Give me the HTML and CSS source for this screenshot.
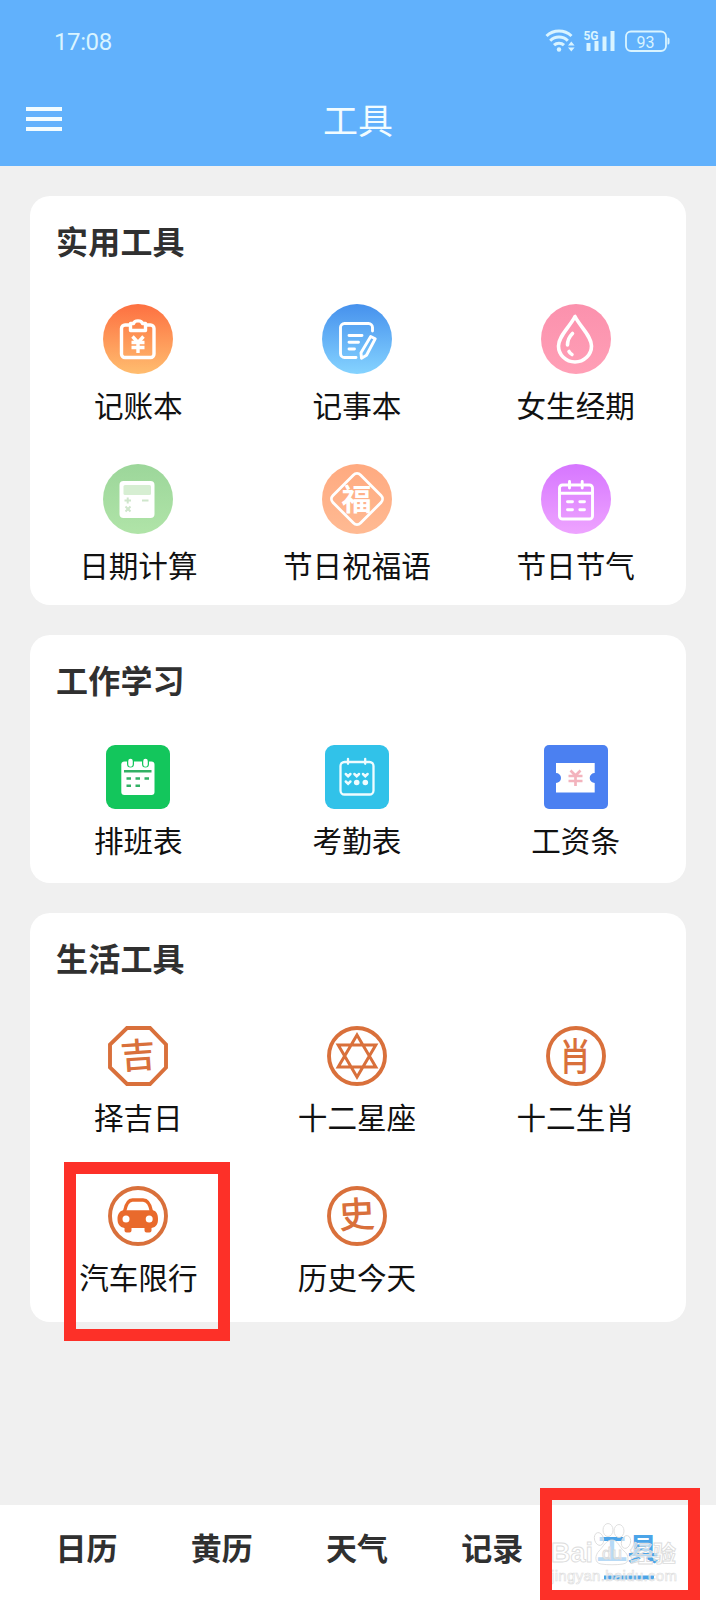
FILE: index.html
```
<!DOCTYPE html>
<html lang="zh-CN">
<head>
    <meta charset="UTF-8">
    <meta name="viewport" content="width=device-width, initial-scale=1.0">
    <title>工具</title>
    <link rel="stylesheet" href="styles.css">
</head>
<body>
    <header class="header">
        <div class="status-bar">
            <span class="time">17:08</span>
            <svg class="status-icons" viewBox="0 0 126 30">
                <g fill="none" stroke="#d9f4ff" stroke-width="3">
                    <path d="M1.5 10a18 18 0 0 1 25 0M5.2 14.7a12.500 12.500 0 0 1 17.600 0M9 19.200a7.200 7.200 0 0 1 10 0"/>
                </g>
                <g fill="#d9f4ff">
                    <circle cx="14" cy="23.500" r="2.200"/>
                    <path d="M23 19.500l3.300-4 3.300 4zM23 21.500h6.600l-3.300 4z"/>
                    <path d="M41.500 17h4v8h-4zM49.500 15h4v10h-4zM57.500 10.500h4V25h-4zM65.500 5h4v20h-4z"/>
                    <text class="net" x="38.500" y="14" textLength="15" lengthAdjust="spacingAndGlyphs">5G</text>
                    <path d="M122.500 11.500c1.500 0 2 1 2 2v3c0 1.500-.5 2-2 2z"/>
                    <text class="battery" x="91.500" y="21.500" textLength="18" lengthAdjust="spacingAndGlyphs">93</text>
                </g>
                <rect x="81" y="5.500" width="40" height="19.500" rx="5" fill="none" stroke="#d9f4ff" stroke-width="1.800"/>
            </svg>
        </div>
        <div class="title-bar">
            <div class="menu"><i></i><i></i><i></i></div>
            <h1>工具</h1>
        </div>
    </header>

    <main class="content">
        <section class="card card-practical">
            <h2>实用工具</h2>
            <div class="grid">
                <div class="item">
                    <svg class="icon" viewBox="0 0 70 70">
                        <defs><linearGradient id="g1" x2="0" y2="1"><stop stop-color="#fd7041"/><stop offset="1" stop-color="#ffbd6f"/></linearGradient></defs>
                        <circle cx="35" cy="35" r="35" fill="url(#g1)"/>
                        <g fill="none" stroke="#fff" stroke-width="3.400" stroke-linejoin="round">
                            <path d="M26 21h-4a3.500 3.500 0 0 0-3.500 3.500v25.500a3.500 3.500 0 0 0 3.500 3.500h25.500a3.500 3.500 0 0 0 3.500-3.500v-25.500a3.500 3.500 0 0 0-3.500-3.500h-4"/>
                            <path d="M27.500 26.500v-7h3c1-3.500 8-3.500 9 0h3v7z"/>
                            <path d="M29.500 32.500l5.500 6 5.500-6M35 38.500v10.500M28.500 38.500h13M28.500 43.500h13"/>
                        </g>
                    </svg>
                    <span>记账本</span>
                </div>
                <div class="item">
                    <svg class="icon" viewBox="0 0 70 70">
                        <defs><linearGradient id="g2" x2="0" y2="1"><stop stop-color="#4691ed"/><stop offset="1" stop-color="#85d3ff"/></linearGradient></defs>
                        <circle cx="35" cy="35" r="35" fill="url(#g2)"/>
                        <g fill="none" stroke="#fff" stroke-width="2.900" stroke-linecap="round" stroke-linejoin="round">
                            <path d="M50.500 27v-3.500a4 4 0 0 0-4-4h-24a4 4 0 0 0-4 4v26a4 4 0 0 0 4 4H34"/>
                            <path d="M27 31.500h13M27 38.200h9.500M27 45h5.500"/>
                            <path d="M48.700 32.500l4.500 2.300-8.700 16.500-5 3-.5-5.500z"/>
                        </g>
                    </svg>
                    <span>记事本</span>
                </div>
                <div class="item">
                    <svg class="icon" viewBox="0 0 70 70">
                        <defs><linearGradient id="g3" x2="0" y2="1"><stop stop-color="#fb91ad"/><stop offset="1" stop-color="#ff9fb6"/></linearGradient></defs>
                        <circle cx="35" cy="35" r="35" fill="url(#g3)"/>
                        <g fill="none" stroke="#fff" stroke-width="3.600" stroke-linecap="round" stroke-linejoin="round">
                            <path d="M34 12.500C29 22.500 17.500 32 17.500 42a16.500 16 0 0 0 33 0C50.500 32 39 22.500 34 12.500z"/>
                            <path d="M31.500 29.500q-5 5-5 11.500M28 47.500q1 2 3 3"/>
                        </g>
                    </svg>
                    <span>女生经期</span>
                </div>
                <div class="item">
                    <svg class="icon" viewBox="0 0 70 70">
                        <defs><linearGradient id="g4" x2="0" y2="1"><stop stop-color="#9cd69a"/><stop offset="1" stop-color="#b0e4a8"/></linearGradient></defs>
                        <circle cx="35" cy="35" r="35" fill="url(#g4)"/>
                        <rect x="16.500" y="17" width="35" height="37" rx="4" fill="#fff"/>
                        <rect x="20.500" y="21" width="27.500" height="10" rx="1.500" fill="#d6eed2"/>
                        <path d="M21.500 36.500h6.500M24.700 33.500v6M39 36.500h6.500M22.500 42.500l5 5M27.500 42.500l-5 5" fill="none" stroke="#cfe6cc" stroke-width="2"/>
                    </svg>
                    <span>日期计算</span>
                </div>
                <div class="item">
                    <svg class="icon" viewBox="0 0 70 70">
                        <defs><linearGradient id="g5" x2="0" y2="1"><stop stop-color="#ffaa80"/><stop offset="1" stop-color="#ffba93"/></linearGradient></defs>
                        <circle cx="35" cy="35" r="35" fill="url(#g5)"/>
                        <rect x="15.500" y="15.500" width="39" height="39" rx="5" transform="rotate(45 35 35)" fill="none" stroke="#fff" stroke-width="2.800"/>
                        <text class="glyph glyph-fu" x="34.500" y="46">福</text>
                    </svg>
                    <span>节日祝福语</span>
                </div>
                <div class="item">
                    <svg class="icon" viewBox="0 0 70 70">
                        <defs><linearGradient id="g6" x2="0" y2="1"><stop stop-color="#d676ff"/><stop offset="1" stop-color="#eea4ff"/></linearGradient></defs>
                        <circle cx="35" cy="35" r="35" fill="url(#g6)"/>
                        <g fill="none" stroke="#fff" stroke-width="2.900" stroke-linecap="round">
                            <rect x="18.500" y="21" width="33" height="34" rx="3"/>
                            <path d="M18.500 29.300h33M28.500 17.500v6.500M41.200 17.500v6.500M26.500 37.700h5M38.800 37.700h4.700M26.500 45.700h5M38.800 45.700h4.700"/>
                        </g>
                    </svg>
                    <span>节日节气</span>
                </div>
            </div>
        </section>

        <section class="card card-work">
            <h2>工作学习</h2>
            <div class="grid">
                <div class="item">
                    <svg class="icon" viewBox="0 0 64 64">
                        <rect width="64" height="64" rx="9" fill="#13c65c"/>
                        <rect x="15.300" y="16.500" width="33.200" height="33.500" rx="3" fill="#fff"/>
                        <path d="M24.500 16v3M39.500 16v3" stroke="#13c65c" stroke-width="7" stroke-linecap="round"/>
                        <path d="M24.500 16v3.500M39.500 16v3.500" stroke="#fff" stroke-width="4.500" stroke-linecap="round"/>
                        <path d="M18 26.200h27.500M20.500 33.500h4.500M29.500 33.500h4.500M38.500 33.500h4.500M20.500 40.700h4.500M29.500 40.700h4.500" stroke="#32b165" stroke-width="2.600"/>
                    </svg>
                    <span>排班表</span>
                </div>
                <div class="item">
                    <svg class="icon" viewBox="0 0 64 64">
                        <rect width="64" height="64" rx="9" fill="#31c2e9"/>
                        <g fill="none" stroke="#effcff" stroke-width="2.300" stroke-linecap="round">
                            <rect x="15.500" y="17" width="33" height="32.500" rx="4"/>
                            <path d="M23 13.800v5M40.200 13.800v5"/>
                            <path d="M20.800 29l2.300 2.300 2.300-2.300M29.400 29l2.300 2.300 2.300-2.300M38 29l2.300 2.300 2.300-2.300M20.800 36.500l2.300 2.300 2.300-2.300" stroke-width="2.500"/>
                        </g>
                        <circle cx="31.700" cy="37.500" r="2.800" fill="#effcff"/>
                        <circle cx="40.300" cy="37.500" r="2.800" fill="#effcff"/>
                    </svg>
                    <span>考勤表</span>
                </div>
                <div class="item">
                    <svg class="icon" viewBox="0 0 64 64">
                        <rect width="64" height="64" rx="5" fill="#4b80f1"/>
                        <path d="M12 18h38.700v10a5 5 0 0 0 0 10v9.500H12V38a5 5 0 0 0 0-10z" fill="#fff"/>
                        <path d="M26.500 25.500l5 5 5-5M31.500 30v11M24.500 31h14M24.500 36h14" fill="none" stroke="#f3b3bd" stroke-width="2.700"/>
                    </svg>
                    <span>工资条</span>
                </div>
            </div>
        </section>

        <section class="card card-life">
            <h2>生活工具</h2>
            <div class="grid">
                <div class="item">
                    <svg class="icon" viewBox="0 0 60 60">
                        <path d="M19 2h23l16 16.500v23L42 58H19L2 41.500v-23z" class="line"/>
                        <text class="glyph" x="30" y="42" transform="rotate(-4 30 30)">吉</text>
                    </svg>
                    <span>择吉日</span>
                </div>
                <div class="item">
                    <svg class="icon" viewBox="0 0 60 60">
                        <circle cx="30" cy="30" r="28" class="line"/>
                        <path d="M30 9l18.800 31.900H11.200zM30 51L11.200 19.100h37.600z" class="line star"/>
                    </svg>
                    <span>十二星座</span>
                </div>
                <div class="item">
                    <svg class="icon" viewBox="0 0 60 60">
                        <circle cx="30" cy="30" r="28" class="line"/>
                        <text class="glyph glyph-xiao" x="-1" y="44" transform="translate(30 0) scale(.85 1)">肖</text>
                    </svg>
                    <span>十二生肖</span>
                </div>
                <div class="item">
                    <svg class="icon" viewBox="0 0 60 60">
                        <circle cx="30" cy="30" r="28" class="line"/>
                        <path d="M16.500 25.500c1.500-8 4-11.500 8-11.500h10.500c4.500 0 7 3.500 8.500 11.500" class="line car"/>
                        <path d="M15 24.300h30c3.500 1 5 4 5 8.700 0 5-1.500 8-6.500 9v2.500q0 2-2 2h-3q-2 0-2-2V42h-13v2.500q0 2-2 2h-3q-2 0-2-2V42c-5-1-7-4-7-9 0-4.700 2-7.700 5.500-8.700z" fill="#e96a2c"/>
                        <circle cx="18" cy="33" r="3.500" fill="#fff"/>
                        <circle cx="41.200" cy="33" r="3.500" fill="#fff"/>
                    </svg>
                    <span>汽车限行</span>
                </div>
                <div class="item">
                    <svg class="icon" viewBox="0 0 60 60">
                        <circle cx="30" cy="30" r="28" class="line"/>
                        <text class="glyph glyph-shi" x="30" y="41.500" transform="rotate(-3 30 30)">史</text>
                    </svg>
                    <span>历史今天</span>
                </div>
            </div>
        </section>
    </main>

    <nav class="tabs">
        <span>日历</span>
        <span>黄历</span>
        <span>天气</span>
        <span>记录</span>
        <span class="active">工具</span>
    </nav>

    <svg class="watermark" viewBox="0 0 140 66">
        <path class="underline" d="M54 57.500h50"/>
        <g class="mark">
            <ellipse cx="49" cy="19" rx="4.500" ry="6.500" transform="rotate(-15 49 19)"/>
            <ellipse cx="58" cy="10" rx="5" ry="6.500"/>
            <ellipse cx="69" cy="11" rx="5" ry="6.500"/>
            <ellipse cx="76" cy="22" rx="4.500" ry="6.500" transform="rotate(15 76 22)"/>
            <path d="M62 20c6 0 7 7 12 11s6 12-1 13c-6 1-16 1-22 0-7-1-6-9-2-13s7-11 13-11z"/>
            <text class="wm-main" x="1" y="42" textLength="42" lengthAdjust="spacingAndGlyphs">Bai</text>
            <text class="wm-du" x="52" y="39" textLength="20">du</text>
            <text class="wm-main wm-cjk" x="80" y="42" textLength="46">经验</text>
            <text class="wm-url" x="1" y="61" textLength="126">jingyan.baidu.com</text>
        </g>
    </svg>
    <div class="frame frame-item"></div>
    <div class="frame frame-tab"></div>
</body>
</html>
```
FILE: styles.css
```
* {
    margin: 0;
    padding: 0;
    box-sizing: border-box;
}

body {
    position: relative;
    width: 716px;
    height: 1600px;
    display: flex;
    flex-direction: column;
    overflow: hidden;
    background: #f0f0f0;
    color: #111;
    font-family: 'Noto Sans CJK SC', sans-serif;
}

.header {
    height: 166px;
    background: #61b1fc;
    color: #f2fcff;
}

.status-bar {
    height: 80px;
    padding: 2px 45px 0 54px;
    display: flex;
    align-items: center;
    justify-content: space-between;
}

.time {
    padding-top: 1px;
    font: 24px Roboto, sans-serif;
    letter-spacing: -0.4px;
    color: #d9f4ff;
}

.status-icons {
    width: 126px;
    height: 30px;
}

.net {
    font: bold 13px Roboto, sans-serif;
}

.battery {
    font: 16px Roboto, sans-serif;
}

.title-bar {
    height: 78px;
    display: grid;
    grid-template-columns: 100px 1fr 100px;
    align-items: center;
}

.menu {
    width: 36px;
    margin-left: 26px;
    display: grid;
    gap: 6px;
}

.menu i {
    height: 4px;
    background: #f2fcff;
}

h1 {
    font-size: 35px;
    font-weight: 400;
    line-height: 50px;
    text-align: center;
}

.content {
    flex: 1;
    padding: 30px 30px 0;
}

.card {
    height: 409px;
    margin-bottom: 30px;
    border-radius: 20px;
    background: #fff;
}

h2 {
    padding: 22px 0 0 26px;
    font-size: 32px;
    font-weight: 700;
    letter-spacing: 0.2px;
    line-height: 44px;
    color: #303030;
}

.grid {
    display: grid;
    grid-template-columns: repeat(3, 1fr);
    grid-auto-rows: 160px;
    margin-left: -1px;
    margin-right: 1px;
    padding-top: 42px;
}

.item {
    display: flex;
    flex-direction: column;
    align-items: center;
    gap: 11px;
    font-size: 29.6px;
    line-height: 40px;
}

.icon {
    width: 70px;
    height: 70px;
}

.card-work {
    height: 248px;
}

.card-work .grid {
    padding-top: 44px;
}

.card-work .icon {
    width: 64px;
    height: 64px;
}

.card-life .grid {
    padding-top: 47px;
}

.card-life .icon {
    width: 60px;
    height: 60px;
}

.line {
    fill: none;
    stroke: #d9703b;
    stroke-width: 3.9;
}

.star {
    stroke-width: 3;
}

.car {
    stroke: #e96a2c;
    stroke-width: 3.4;
}

.glyph {
    font-size: 35px;
    font-weight: 500;
    text-anchor: middle;
    fill: #d9703b;
}

.glyph-xiao {
    font-size: 38px;
}

.glyph-shi {
    font-size: 36px;
}

.glyph-fu {
    font-size: 30px;
    font-weight: 700;
    fill: #fff;
}

.tabs {
    height: 95px;
    padding: 0 21px 0 19px;
    display: grid;
    grid-template-columns: repeat(5, 1fr);
    background: #fff;
    color: #303030;
    font-size: 31px;
    font-weight: 700;
    line-height: 83px;
    text-align: center;
}

.active {
    color: #4ba4e8;
}

.frame {
    position: absolute;
    border: 12.5px solid #fd3028;
}

.frame-item {
    left: 64px;
    top: 1162px;
    width: 166px;
    height: 179px;
}

.frame-tab {
    left: 540px;
    top: 1488px;
    width: 160px;
    height: 114px;
}

.watermark {
    position: absolute;
    left: 550px;
    top: 1520px;
    width: 140px;
    height: 66px;
}

.mark {
    fill: rgba(255, 255, 255, 0.6);
    stroke: #dcdcdc;
    stroke-width: 0.9;
    font-family: 'Liberation Sans', 'Noto Sans CJK SC', sans-serif;
}

.wm-main {
    font-size: 27px;
    font-weight: 700;
}

.wm-cjk {
    font-size: 23px;
}

.wm-du {
    font-size: 17px;
}

.wm-url {
    font-size: 15px;
    stroke-width: 0.6;
}

.underline {
    stroke: #4ba4e8;
    stroke-width: 4;
}
```
